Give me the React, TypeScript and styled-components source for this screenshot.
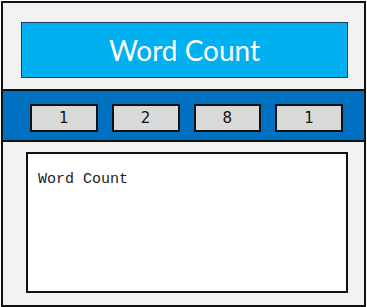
import styled, { createGlobalStyle } from 'styled-components';

const GlobalStyle = createGlobalStyle`
  body {
    margin: 0;
    background: #ffffff;
  }
`;

const Frame = styled.div`
  box-sizing: border-box;
  width: 365px;
  height: 306px;
  margin: 1px 0 0 1px;
  border: 2px solid #111;
  background: #f2f2f2;
  display: flex;
  flex-direction: column;
`;

const Header = styled.div`
  height: 54px;
  margin: 19px 16px 0 18px;
  border: 1px solid #1f3a5a;
  background: #00b0f0;
  color: #fff;
  display: flex;
  align-items: center;
  justify-content: center;
  font-family: Lato, "Open Sans", sans-serif;
  font-size: 28px;
`;

const Band = styled.div`
  margin-top: 11px;
  border-top: 2px solid #111;
  border-bottom: 2px solid #111;
  background: #0070c0;
  padding: 13px 21px 8px 27px;
  display: grid;
  grid-template-columns: repeat(4, 1fr);
  gap: 14px;
`;

const Counter = styled.div`
  box-sizing: border-box;
  height: 28px;
  border: 2px solid #111;
  background: #d9d9d9;
  display: flex;
  align-items: center;
  justify-content: center;
  font-family: "DejaVu Sans", Verdana, sans-serif;
  font-size: 15px;
  color: #111;
`;

const TextBox = styled.div`
  box-sizing: border-box;
  height: 141px;
  margin: 10px 16px 0 23px;
  border: 2px solid #111;
  background: #fff;
  padding: 17px 10px;
  font-family: "Liberation Mono", "Courier New", monospace;
  font-size: 15px;
  color: #222;
`;

const counts = [1, 2, 8, 1];

export default function App() {
  return (
    <>
      <GlobalStyle />
      <Frame>
        <Header>Word Count</Header>
        <Band>
          {counts.map((n, i) => (
            <Counter key={i}>{n}</Counter>
          ))}
        </Band>
        <TextBox>Word Count</TextBox>
      </Frame>
    </>
  );
}
